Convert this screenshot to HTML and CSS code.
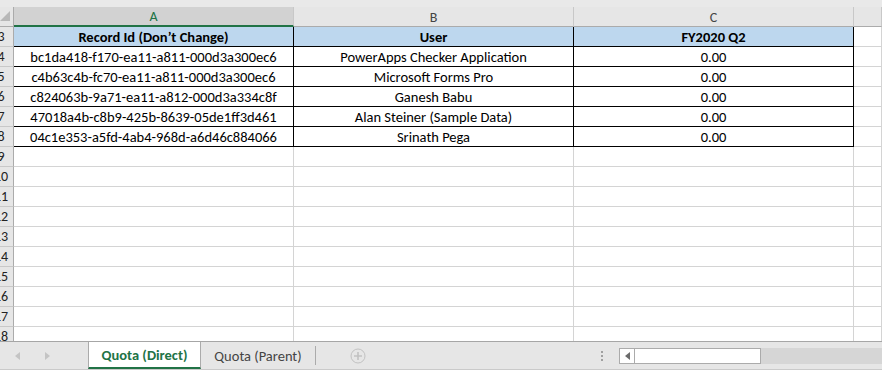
FILE: index.html
```html
<!DOCTYPE html>
<html lang="en">
<head>
  <meta charset="UTF-8" />
  <title>Quota (Direct)</title>
  <link rel="stylesheet" href="styles.css">
</head>
<body>
  <div class="window">
    <div class="top-strip"></div>

    <div class="sheet">
      <!-- column headers -->
      <div class="rh corner">
        <svg width="10" height="10" viewBox="0 0 10 10"><path d="M10 0 L10 10 L0 10 Z" fill="#b8b8b8"/></svg>
      </div>
      <div class="ch selected">A</div>
      <div class="ch">B</div>
      <div class="ch">C</div>
      <div class="ch"></div>

      <!-- row 3 : table header -->
      <div class="rh"><span>3</span></div>
      <div class="cell tb thead">Record Id (Don’t Change)</div>
      <div class="cell tb thead">User</div>
      <div class="cell tb thead">FY2020 Q2</div>
      <div class="cell"></div>

      <div class="rh"><span>4</span></div>
      <div class="cell tb">bc1da418-f170-ea11-a811-000d3a300ec6</div>
      <div class="cell tb">PowerApps Checker Application</div>
      <div class="cell tb">0.00</div>
      <div class="cell"></div>

      <div class="rh"><span>5</span></div>
      <div class="cell tb">c4b63c4b-fc70-ea11-a811-000d3a300ec6</div>
      <div class="cell tb">Microsoft Forms Pro</div>
      <div class="cell tb">0.00</div>
      <div class="cell"></div>

      <div class="rh"><span>6</span></div>
      <div class="cell tb">c824063b-9a71-ea11-a812-000d3a334c8f</div>
      <div class="cell tb">Ganesh Babu</div>
      <div class="cell tb">0.00</div>
      <div class="cell"></div>

      <div class="rh"><span>7</span></div>
      <div class="cell tb">47018a4b-c8b9-425b-8639-05de1ff3d461</div>
      <div class="cell tb">Alan Steiner (Sample Data)</div>
      <div class="cell tb">0.00</div>
      <div class="cell"></div>

      <div class="rh"><span>8</span></div>
      <div class="cell tb">04c1e353-a5fd-4ab4-968d-a6d46c884066</div>
      <div class="cell tb">Srinath Pega</div>
      <div class="cell tb">0.00</div>
      <div class="cell"></div>

      <!-- empty rows -->
      <div class="rh"><span>9</span></div><div class="cell"></div><div class="cell"></div><div class="cell"></div><div class="cell"></div>
      <div class="rh"><span>10</span></div><div class="cell"></div><div class="cell"></div><div class="cell"></div><div class="cell"></div>
      <div class="rh"><span>11</span></div><div class="cell"></div><div class="cell"></div><div class="cell"></div><div class="cell"></div>
      <div class="rh"><span>12</span></div><div class="cell"></div><div class="cell"></div><div class="cell"></div><div class="cell"></div>
      <div class="rh"><span>13</span></div><div class="cell"></div><div class="cell"></div><div class="cell"></div><div class="cell"></div>
      <div class="rh"><span>14</span></div><div class="cell"></div><div class="cell"></div><div class="cell"></div><div class="cell"></div>
      <div class="rh"><span>15</span></div><div class="cell"></div><div class="cell"></div><div class="cell"></div><div class="cell"></div>
      <div class="rh"><span>16</span></div><div class="cell"></div><div class="cell"></div><div class="cell"></div><div class="cell"></div>
      <div class="rh"><span>17</span></div><div class="cell"></div><div class="cell"></div><div class="cell"></div><div class="cell"></div>
      <div class="rh"><span>18</span></div><div class="cell"></div><div class="cell"></div><div class="cell"></div><div class="cell"></div>
    </div>

    <div class="tab-bar">
      <div class="tab-nav">
        <svg width="6" height="8" viewBox="0 0 6 8"><path d="M5 0 L0 4 L5 8 Z" fill="#c4c4c4"/></svg>
        <svg width="6" height="8" viewBox="0 0 6 8"><path d="M1 0 L6 4 L1 8 Z" fill="#c4c4c4"/></svg>
      </div>
      <div class="tab active">Quota (Direct)</div>
      <div class="tab">Quota (Parent)</div>
      <div class="tab-add">
        <svg width="16" height="16" viewBox="0 0 16 16">
          <circle cx="8" cy="8" r="7" fill="none" stroke="#c2c2c2" stroke-width="1"/>
          <path d="M8 4 V12 M4 8 H12" stroke="#c2c2c2" stroke-width="1.6"/>
        </svg>
      </div>
      <div class="spacer"></div>
      <div class="dots"><i></i><i></i><i></i></div>
      <div class="hscroll">
        <div class="hscroll-btn">
          <svg width="5" height="8" viewBox="0 0 5 8"><path d="M5 0 L0 4 L5 8 Z" fill="#6b6b6b"/></svg>
        </div>
        <div class="hscroll-thumb"></div>
      </div>
      <div class="hscroll-track"></div>
    </div>
  </div>
</body>
</html>
```

FILE: styles.css
```css
body {
  margin: 0;
  background: #ffffff;
  font-family: Carlito, Calibri, "Open Sans", sans-serif;
  color: #000;
}

.window {
  width: 882px;
  height: 371px;
  overflow: hidden;
  display: flex;
  flex-direction: column;
}

.top-strip {
  height: 7px;
  background: #e9e9e9;
  flex: none;
}

/* Grid of cells */
.sheet {
  display: grid;
  grid-template-columns: 14px 280px 280px 280px 1fr;
  grid-auto-rows: 20px;
  height: 334px;
  overflow: hidden;
  flex: none;
}

.sheet > div {
  box-sizing: border-box;
  border-right: 1px solid #d4d4d4;
  border-bottom: 1px solid #d4d4d4;
  overflow: hidden;
  white-space: nowrap;
}

/* column headers */
.ch {
  background: #e6e6e6;
  border-right-color: #c8c8c8 !important;
  border-bottom-color: #ababab !important;
  color: #444;
  font-size: 14px;
  text-align: center;
  line-height: 19px;
  padding-top: 1px;
}

.ch.selected {
  background: #d2d2d2;
  color: #217346;
  border-bottom: 2px solid #217346 !important;
  line-height: 18px;
}

/* row headers */
.rh {
  background: #e6e6e6;
  border-right-color: #ababab !important;
  border-bottom-color: #c8c8c8 !important;
  color: #222;
  font-size: 14px;
  line-height: 20px;
}

.rh span {
  display: block;
  width: 26px;
  margin-left: -12px;
  text-align: center;
}

.rh.corner {
  display: flex;
  align-items: flex-end;
  padding-bottom: 5px;
  border-bottom-color: #ababab !important;
}

/* data cells */
.cell {
  font-size: 14.5px;
  text-align: center;
  line-height: 19px;
  padding-top: 1px;
}

.cell.tb {
  border-right-color: #000 !important;
  border-bottom-color: #000 !important;
}

.cell.thead {
  background: #bdd7ee;
  font-weight: bold;
}

/* Sheet tabs */
.tab-bar {
  flex: none;
  display: flex;
  height: 29px;
  box-sizing: border-box;
  background: #e6e6e6;
  border-top: 1px solid #a6a6a6;
  border-bottom: 1px solid #cacaca;
}

.tab-nav {
  width: 88px;
  display: flex;
  align-items: center;
  gap: 23px;
  padding-left: 15px;
  box-sizing: border-box;
}

.tab {
  width: 115px;
  box-sizing: border-box;
  display: flex;
  align-items: center;
  justify-content: center;
  font-size: 14.5px;
  color: #444;
  border-right: 1px solid #ababab;
  margin: 4px 0 4px;
}

.tab.active {
  width: 113px;
  margin: 0;
  background: #ffffff;
  color: #217346;
  font-weight: bold;
  border-left: 1px solid #ababab;
  border-right: 1px solid #ababab;
  border-bottom: 2px solid #217346;
  padding-top: 1px;
}

.tab-add {
  width: 84px;
  display: flex;
  align-items: center;
  padding-left: 34px;
  box-sizing: border-box;
}

.spacer {
  flex: 1;
}

.dots {
  width: 14px;
  margin-right: 10px;
  display: flex;
  flex-direction: column;
  align-items: center;
  justify-content: center;
  gap: 2px;
}

.dots i {
  display: block;
  width: 2px;
  height: 2px;
  background: #a0a0a0;
}

.hscroll {
  width: 142px;
  height: 16px;
  align-self: center;
  box-sizing: border-box;
  border: 1px solid #ababab;
  background: #fff;
  display: flex;
}

.hscroll-btn {
  width: 14px;
  border-right: 1px solid #ababab;
  display: flex;
  align-items: center;
  justify-content: center;
}

.hscroll-thumb {
  flex: 1;
}

.hscroll-track {
  width: 121px;
  height: 16px;
  align-self: center;
  background: #d6d6d6;
}
```
